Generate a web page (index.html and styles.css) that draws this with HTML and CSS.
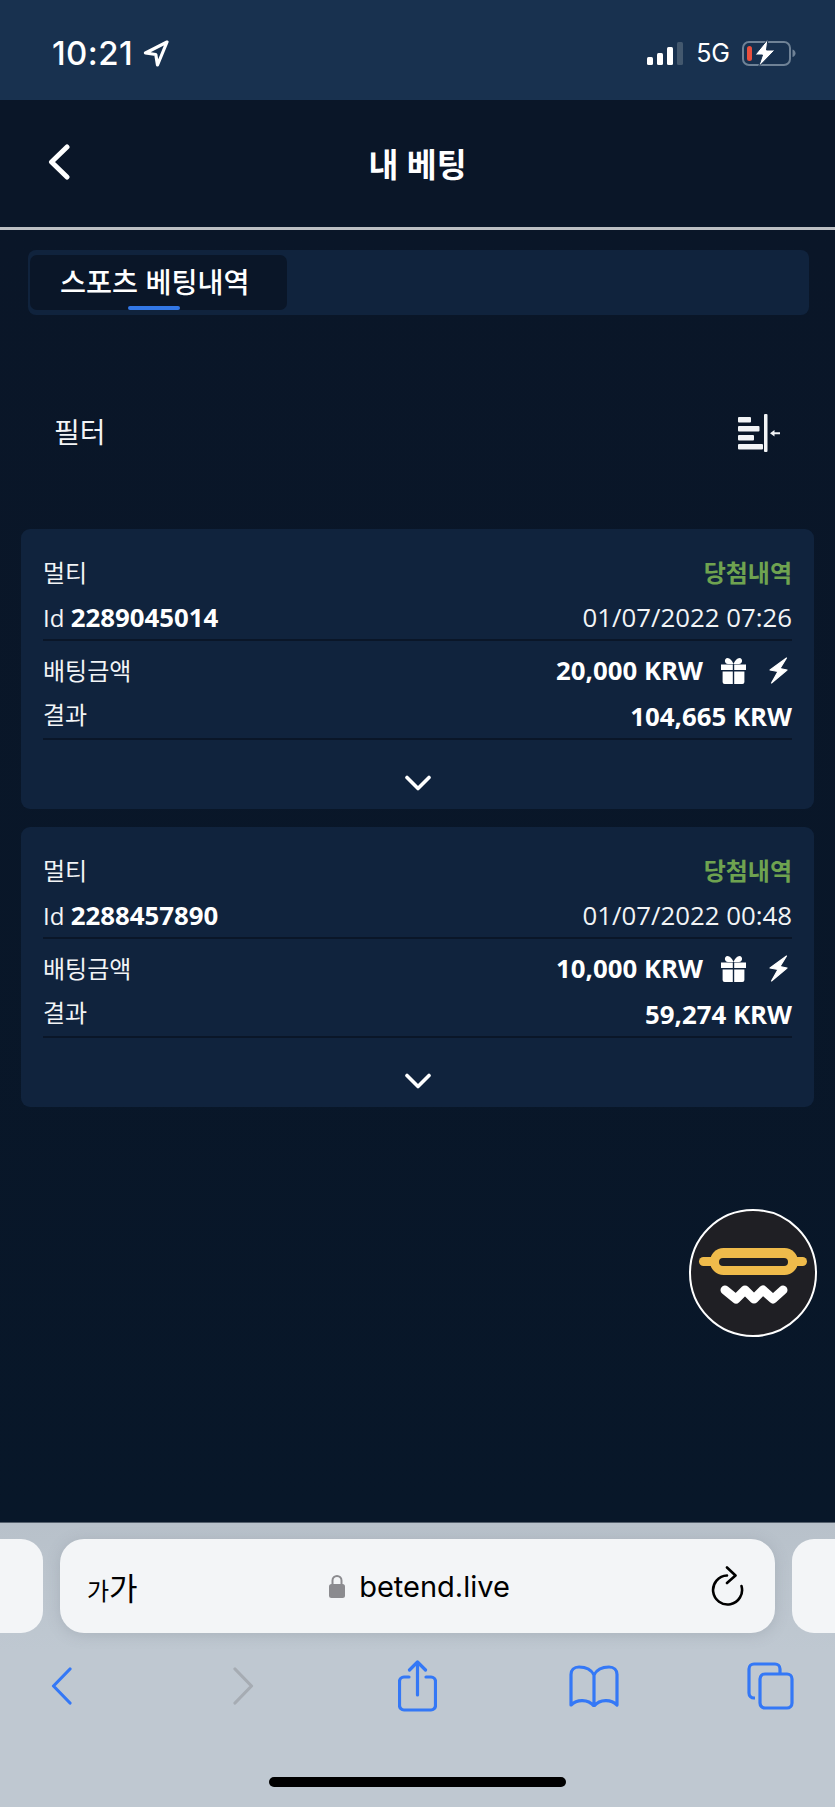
FILE: index.html
```html
<!DOCTYPE html>
<html lang="ko">
<head>
<meta charset="utf-8">
<title>내 베팅</title>
<link rel="stylesheet" href="styles.css">
</head>
<body>
<div class="screen">
  <header class="statusbar">
    <div class="status-left">
      <span class="clock">10:21</span>
      <svg class="loc" width="26" height="27" viewBox="0 0 26 27"><path d="M24 2 2.500 13l10.300 1.500L14.500 25z" fill="none" stroke="#fff" stroke-width="3.200" stroke-linejoin="round"/></svg>
    </div>
    <div class="status-right">
      <div class="signal">
        <i class="bar b1"></i><i class="bar b2"></i><i class="bar b3"></i><i class="bar b4"></i>
      </div>
      <span class="net">5G</span>
      <svg class="battery" width="54" height="28" viewBox="0 0 54 28">
        <rect x="1" y="3" width="47" height="23" rx="6" fill="none" stroke="#6f8296" stroke-width="2"/>
        <path d="M50.500 10.500c2 .6 3 2 3 3.700s-1 3.100-3 3.800z" fill="#6f8296"/>
        <rect x="5" y="7" width="5" height="15" rx="2.500" fill="#ea4f3d"/>
        <path d="M26 0 13 16h7.500L16.500 28 33 11h-8.500z" fill="#fff" stroke="#18314f" stroke-width="1"/>
      </svg>
    </div>
  </header>

  <nav class="topbar">
    <svg class="back" width="24" height="36" viewBox="0 0 24 36"><path d="M20 3 4.500 18 20 33" fill="none" stroke="#fff" stroke-width="5" stroke-linecap="round" stroke-linejoin="round"/></svg>
    <h1 class="page-title">내 베팅</h1>
  </nav>

  <main class="content">
    <div class="tabs">
      <div class="tab">스포츠 베팅내역<span class="tab-mark"></span></div>
    </div>

    <div class="filter-row">
      <span class="ko">필터</span>
      <svg width="44" height="40" viewBox="0 0 44 40">
        <g fill="#f2f4f6">
          <rect x="2" y="4" width="13" height="5.500" rx="1"/>
          <rect x="2" y="13" width="21.500" height="5.500" rx="1"/>
          <rect x="2" y="22" width="16" height="5.500" rx="1"/>
          <rect x="2" y="31" width="25" height="5.500" rx="1"/>
          <rect x="28" y="1" width="3.500" height="38" rx="1"/>
          <path d="M34 20.200 38.500 17v2.200H44v2h-5.500v2.200z"/>
        </g>
      </svg>
    </div>

    <section class="card">
      <div class="row"><span class="ko">멀티</span><span class="ko won">당첨내역</span></div>
      <div class="row row-rule"><span>Id <b>2289045014</b></span><span class="date">01/07/2022 07:26</span></div>
      <div class="row row-gap">
        <span class="ko">배팅금액</span>
        <span class="amount"><b>20,000 KRW</b>
          <svg class="gift" width="27" height="27" viewBox="0 0 27 27"><path d="M1 7.500h11.800V13H1zM14.200 7.500H26V13H14.200zM2.600 14.500h10.200V27H4.600a2 2 0 0 1-2-2zM14.200 14.500h10.200V25a2 2 0 0 1-2 2h-8.200zM13.500 7 8 7C4 7 4 1 7.500 1c2.500 0 4.500 2.500 6 6zm0 0 5.500 0c4 0 4-6 .5-6-2.500 0-4.500 2.500-6 6z" fill="#fff"/></svg>
          <svg class="bolt" width="19" height="27" viewBox="0 0 19 27"><path d="M17.500 1 1 13l8 1.500L2.500 26 18 13l-7-1.500z" fill="#fff" stroke="#fff" stroke-width="1.200" stroke-linejoin="round"/></svg>
        </span>
      </div>
      <div class="row row-rule"><span class="ko">결과</span><b>104,665 KRW</b></div>
      <div class="toggle"><svg width="26" height="16" viewBox="0 0 26 16"><path d="M2 2.500 13 13.500 24 2.500" fill="none" stroke="#fff" stroke-width="3.600" stroke-linecap="round" stroke-linejoin="round"/></svg></div>
    </section>

    <section class="card">
      <div class="row"><span class="ko">멀티</span><span class="ko won">당첨내역</span></div>
      <div class="row row-rule"><span>Id <b>2288457890</b></span><span class="date">01/07/2022 00:48</span></div>
      <div class="row row-gap">
        <span class="ko">배팅금액</span>
        <span class="amount"><b>10,000 KRW</b>
          <svg class="gift" width="27" height="27" viewBox="0 0 27 27"><path d="M1 7.500h11.800V13H1zM14.200 7.500H26V13H14.200zM2.600 14.500h10.200V27H4.600a2 2 0 0 1-2-2zM14.200 14.500h10.200V25a2 2 0 0 1-2 2h-8.200zM13.500 7 8 7C4 7 4 1 7.500 1c2.500 0 4.500 2.500 6 6zm0 0 5.500 0c4 0 4-6 .5-6-2.500 0-4.500 2.500-6 6z" fill="#fff"/></svg>
          <svg class="bolt" width="19" height="27" viewBox="0 0 19 27"><path d="M17.500 1 1 13l8 1.500L2.500 26 18 13l-7-1.500z" fill="#fff" stroke="#fff" stroke-width="1.200" stroke-linejoin="round"/></svg>
        </span>
      </div>
      <div class="row row-rule"><span class="ko">결과</span><b>59,274 KRW</b></div>
      <div class="toggle"><svg width="26" height="16" viewBox="0 0 26 16"><path d="M2 2.500 13 13.500 24 2.500" fill="none" stroke="#fff" stroke-width="3.600" stroke-linecap="round" stroke-linejoin="round"/></svg></div>
    </section>

    <!-- floating chat launcher -->
    <svg class="launcher" width="130" height="130" viewBox="0 0 130 130">
      <circle cx="65" cy="65" r="63" fill="#1f1f24" stroke="#fff" stroke-width="2"/>
      <rect x="11" y="49" width="108" height="9" rx="4.500" fill="#efbb4b"/>
      <rect x="22" y="40" width="88" height="27" rx="13.500" fill="#efbb4b"/>
      <rect x="31" y="50" width="69" height="8" rx="4" fill="#1f1f24"/>
      <path d="M37 82 48 91 57 82 66 91 75 82 85 91 95 82" fill="none" stroke="#fff" stroke-width="9" stroke-linecap="round" stroke-linejoin="round"/>
    </svg>
  </main>

  <footer class="browser">
    <div class="url-row">
      <div class="pill pill-left"></div>
      <div class="url-bar">
        <span class="text-size"><span class="ts-small">가</span><span class="ts-large">가</span></span>
        <span class="address">
          <svg width="16" height="24" viewBox="0 0 16 24"><path d="M3.500 11V6.500a4.500 4.500 0 0 1 9 0V11" fill="none" stroke="#8b8b8f" stroke-width="2"/><rect x="0" y="10" width="16" height="14" rx="2.500" fill="#8b8b8f"/></svg>
          betend.live
        </span>
        <svg width="34" height="40" viewBox="0 0 34 40"><path d="M30.500 20A14.500 14.500 0 1 1 16 9.500M16 1.500l8.500 8-8.500 7.500" fill="none" stroke="#000" stroke-width="2.600" stroke-linecap="round" stroke-linejoin="round"/></svg>
      </div>
      <div class="pill pill-right"></div>
    </div>
    <div class="nav-row">
      <svg class="nav-back" width="21" height="38" viewBox="0 0 21 38"><path d="M19 2 2.500 19 19 36" fill="none" stroke="#3478f6" stroke-width="3.200" stroke-linecap="round" stroke-linejoin="round"/></svg>
      <svg class="nav-forward" width="21" height="38" viewBox="0 0 21 38"><path d="M2 2 18.500 19 2 36" fill="none" stroke="#a6acb3" stroke-width="3.200" stroke-linecap="round" stroke-linejoin="round"/></svg>
      <svg class="nav-share" width="39" height="52" viewBox="0 0 39 52"><path d="M11 17H6a4.500 4.500 0 0 0-4.500 4.500v24A4.500 4.500 0 0 0 6 50h27a4.500 4.500 0 0 0 4.500-4.500v-24A4.500 4.500 0 0 0 33 17h-5M19.500 35V2M11.500 10l8-8 8 8" fill="none" stroke="#3478f6" stroke-width="3.200" stroke-linecap="round" stroke-linejoin="round"/></svg>
      <svg class="nav-book" width="50" height="42" viewBox="0 0 50 42"><path d="M25 10C22 4 16 2 10 2 5 2 2 5 2 9.500V40c6-6 17-6 23 1 6-7 17-7 23-1V9.500C48 5 45 2 40 2c-6 0-12 2-15 8zM25 10v30" fill="none" stroke="#3478f6" stroke-width="3.200" stroke-linecap="round" stroke-linejoin="round"/></svg>
      <svg class="nav-tabs" width="47" height="48" viewBox="0 0 47 48"><path d="M8 36H7a5 5 0 0 1-5-5V7a5 5 0 0 1 5-5h21a5 5 0 0 1 5 5v4" fill="none" stroke="#3478f6" stroke-width="3.200"/><rect x="13" y="12" width="32" height="34" rx="5" fill="none" stroke="#3478f6" stroke-width="3.200"/></svg>
    </div>
    <div class="home-bar"></div>
  </footer>
</div>
</body>
</html>
```
FILE: styles.css
```css
* { box-sizing: border-box; }

html, body {
  margin: 0;
  padding: 0;
  background: #0a1628;
}

.screen {
  position: relative;
  display: flex;
  flex-direction: column;
  width: 835px;
  height: 1807px;
  overflow: hidden;
  font-family: "Open Sans", "Noto Sans CJK KR", sans-serif;
  color: #f2f4f6;
}

/* status bar */
.statusbar {
  flex: none;
  display: flex;
  justify-content: space-between;
  align-items: center;
  height: 100px;
  padding: 6px 39px 0 52px;
  background: #18314f;
  color: #fff;
  font-family: Inter, "Liberation Sans", sans-serif;
}

.status-left,
.status-right {
  display: flex;
  align-items: center;
}

.clock {
  font-size: 33px;
  font-weight: 500;
  letter-spacing: 0.4px;
}

.loc { margin-left: 10px; }

.signal {
  display: flex;
  align-items: flex-end;
  gap: 4px;
  height: 23px;
}

.bar {
  display: block;
  width: 6px;
  border-radius: 1.5px;
  background: #fff;
}

.b1 { height: 8px; }
.b2 { height: 12px; }
.b3 { height: 18px; }
.b4 { height: 23px; background: #43586e; }

.net {
  margin: 0 12px 0 13px;
  font-size: 25px;
}

/* page header */
.topbar {
  position: relative;
  flex: none;
  display: flex;
  align-items: center;
  justify-content: center;
  height: 130px;
  border-bottom: 3px solid #bcbfc3;
}

.back {
  position: absolute;
  left: 47px;
  top: 44px;
}

.page-title {
  margin: 0 0 1px;
  font-size: 32.500px;
  font-weight: 700;
  color: #fff;
}

/* main area */
.content {
  flex: 1;
  display: flex;
  flex-direction: column;
  background: linear-gradient(#0a1628, #081729);
}

.tabs {
  height: 65px;
  margin: 20px 26px 0 28px;
  padding: 5px 2px;
  border-radius: 8px;
  background: #10233d;
}

.tab {
  position: relative;
  width: 257px;
  height: 55px;
  padding-left: 30px;
  border-radius: 7px;
  background: #0a1628;
  font-size: 28.300px;
  font-weight: 500;
  line-height: 55px;
  color: #fff;
}

.tab-mark {
  position: absolute;
  left: 98px;
  bottom: 0;
  width: 52px;
  height: 4px;
  border-radius: 2px;
  background: #3277e6;
}

.filter-row {
  display: flex;
  justify-content: space-between;
  align-items: center;
  height: 60px;
  margin: 88px 0 66px;
  padding: 0 55px 0 54px;
  font-size: 28px;
}

.card {
  width: 793px;
  height: 280px;
  margin: 0 0 18px 21px;
  padding: 22px 22px 0;
  border-radius: 9px;
  background: #10233d;
  font-size: 24px;
}

/* hangul sits low in its line box next to the latin digits */
.ko { padding-bottom: 5px; }

.row {
  display: flex;
  justify-content: space-between;
  align-items: center;
  height: 45px;
}

.row b,
.date { font-size: 25.800px; }

.row b { font-weight: 700; color: #fff; }

.row-rule {
  height: 45px;
  padding-bottom: 2px;
  border-bottom: 2px solid #0a1628;
}

.row-gap { margin-top: 9px; }
.row-gap .ko { padding-bottom: 7px; }

.won {
  font-weight: 700;
  color: #6fa350;
}

.date { font-weight: 400; }

.amount {
  display: flex;
  align-items: center;
  padding-bottom: 5px;
}

.gift { margin-left: 17px; }
.bolt { margin: 0 4px 0 22px; }

.toggle {
  display: flex;
  justify-content: center;
  padding-top: 35px;
}

.launcher {
  position: absolute;
  left: 688px;
  top: 1208px;
}

/* browser chrome */
.browser {
  flex: none;
  height: 285px;
  border-top: 1px solid #55606d;
  background: linear-gradient(#b8c1ca, #bfc8d1 45%);
}

.url-row {
  display: flex;
  gap: 17px;
  height: 94px;
  margin-top: 16px;
}

.pill {
  flex: none;
  width: 43px;
  background: #f3f5f7;
}

.pill-left { border-radius: 0 22px 22px 0; }
.pill-right { border-radius: 22px 0 0 22px; }

.url-bar {
  flex: none;
  display: flex;
  justify-content: space-between;
  align-items: center;
  width: 715px;
  padding: 0 30px 0 27px;
  border-radius: 24px;
  background: #f3f5f7;
  box-shadow: 0 2px 14px rgba(110, 120, 130, 0.25);
  color: #000;
  font-family: Inter, "Noto Sans CJK KR", sans-serif;
}

.text-size {
  display: flex;
  align-items: baseline;
  width: 54px;
  font-family: "Noto Sans CJK KR", sans-serif;
}

.ts-small { font-size: 24px; }
.ts-large { font-size: 31px; }

.address {
  display: flex;
  align-items: center;
  gap: 14px;
  margin-right: 200px;
  margin-left: 187px;
  font-size: 29px;
}

.nav-row {
  display: flex;
  align-items: center;
  height: 70px;
  margin-top: 18px;
  padding-left: 51px;
}

.nav-forward { margin-left: 161px; }
.nav-share { margin-left: 144px; }
.nav-book { margin-left: 132px; }
.nav-tabs { margin-left: 128px; }

.home-bar {
  width: 297px;
  height: 10px;
  margin: 56px auto 0;
  border-radius: 5px;
  background: #000;
}
```
